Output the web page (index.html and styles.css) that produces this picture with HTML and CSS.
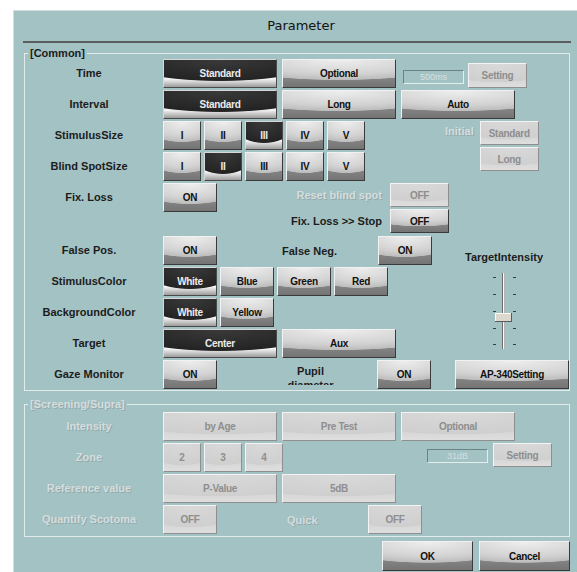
FILE: index.html
```html
<!DOCTYPE html>
<html lang="en">
<head>
  <meta charset="UTF-8">
  <title>Parameter</title>
  <link rel="stylesheet" href="styles.css">
</head>
<body>
  <div class="dialog">
    <div class="title">Parameter</div>
    <div class="rule"></div>

    <!-- Common settings -->
    <fieldset class="group common">
      <legend>[Common]</legend>
      <div class="rows">
        <div class="row">
          <span class="label">Time</span>
          <button class="btn wide on">Standard</button>
          <button class="btn wide">Optional</button>
          <span class="value-box time-box">500ms</span>
          <button class="btn off setting time-setting">Setting</button>
        </div>
        <div class="row">
          <span class="label">Interval</span>
          <button class="btn wide on">Standard</button>
          <button class="btn wide">Long</button>
          <button class="btn wide">Auto</button>
        </div>

        <div class="pair">
          <div class="rows">
            <div class="row">
              <span class="label">StimulusSize</span>
              <button class="btn small">I</button>
              <button class="btn small">II</button>
              <button class="btn small on">III</button>
              <button class="btn small">IV</button>
              <button class="btn small">V</button>
            </div>
            <div class="row">
              <span class="label">Blind SpotSize</span>
              <button class="btn small">I</button>
              <button class="btn small on">II</button>
              <button class="btn small">III</button>
              <button class="btn small">IV</button>
              <button class="btn small">V</button>
            </div>
          </div>
          <div class="initial">
            <span class="dim">Initial</span>
            <div class="stack">
              <button class="btn off setting">Standard</button>
              <button class="btn off setting">Long</button>
            </div>
          </div>
        </div>

        <div class="fix">
          <span class="label">Fix. Loss</span>
          <button class="btn mid">ON</button>
          <div class="stop-grid">
            <span class="dim">Reset blind spot</span>
            <button class="btn off setting">OFF</button>
            <span class="text">Fix. Loss &gt;&gt; Stop</span>
            <button class="btn setting">OFF</button>
          </div>
        </div>

        <div class="middle">
          <div class="rows left-col">
            <div class="row">
              <span class="label">False Pos.</span>
              <button class="btn mid">ON</button>
              <span class="text neg-label">False Neg.</span>
              <button class="btn mid">ON</button>
            </div>
            <div class="row">
              <span class="label">StimulusColor</span>
              <button class="btn mid on">White</button>
              <button class="btn mid">Blue</button>
              <button class="btn mid">Green</button>
              <button class="btn mid">Red</button>
            </div>
            <div class="row">
              <span class="label">BackgroundColor</span>
              <button class="btn mid on">White</button>
              <button class="btn mid">Yellow</button>
            </div>
            <div class="row">
              <span class="label">Target</span>
              <button class="btn wide on">Center</button>
              <button class="btn wide">Aux</button>
            </div>
          </div>
          <div class="intensity">
            <span class="text">TargetIntensity</span>
            <svg class="slider" width="26" height="77" viewBox="0 0 26 77">
              <g fill="#3c3c3c">
                <rect x="2" y="4" width="3" height="1"/><rect x="22" y="4" width="3" height="1"/>
                <rect x="2" y="21" width="3" height="1"/><rect x="22" y="21" width="3" height="1"/>
                <rect x="2" y="38" width="3" height="1"/><rect x="22" y="38" width="3" height="1"/>
                <rect x="2" y="55" width="3" height="1"/><rect x="22" y="55" width="3" height="1"/>
                <rect x="2" y="71" width="3" height="1"/><rect x="22" y="71" width="3" height="1"/>
              </g>
              <rect x="11" y="0" width="1" height="76" fill="#6e6e6e"/>
              <rect x="12" y="0" width="1" height="76" fill="#fafafa"/>
              <rect x="13" y="0" width="1" height="76" fill="#b4b4b4"/>
              <rect x="4" y="40" width="17" height="9" fill="#dcd8ce"/>
              <rect x="4" y="40" width="17" height="1" fill="#fbfbf8"/>
              <rect x="4" y="40" width="1" height="9" fill="#fbfbf8"/>
              <rect x="4" y="48" width="17" height="1" fill="#5a5a5a"/>
              <rect x="20" y="40" width="1" height="9" fill="#5a5a5a"/>
            </svg>
          </div>
        </div>

        <div class="row">
          <span class="label">Gaze Monitor</span>
          <button class="btn mid">ON</button>
          <span class="text pupil">Pupil<br>diameter</span>
          <button class="btn mid pupil-on">ON</button>
          <button class="btn wide ap">AP-340Setting</button>
        </div>
      </div>
    </fieldset>

    <!-- Screening / Supra settings (disabled) -->
    <fieldset class="group screening">
      <legend class="dim">[Screening/Supra]</legend>
      <div class="rows">
        <div class="row">
          <span class="label dim">Intensity</span>
          <button class="btn wide off">by Age</button>
          <button class="btn wide off">Pre Test</button>
          <button class="btn wide off">Optional</button>
        </div>
        <div class="row">
          <span class="label dim">Zone</span>
          <button class="btn small off">2</button>
          <button class="btn small off">3</button>
          <button class="btn small off">4</button>
          <span class="value-box zone-box">31dB</span>
          <button class="btn off setting zone-setting">Setting</button>
        </div>
        <div class="row">
          <span class="label dim">Reference value</span>
          <button class="btn wide off">P-Value</button>
          <button class="btn wide off">5dB</button>
        </div>
        <div class="row">
          <span class="label dim">Quantify Scotoma</span>
          <button class="btn mid off">OFF</button>
          <span class="dim quick">Quick</span>
          <button class="btn mid off">OFF</button>
        </div>
      </div>
    </fieldset>

    <div class="footer">
      <button class="btn footer-btn">OK</button>
      <button class="btn footer-btn">Cancel</button>
    </div>
  </div>
</body>
</html>
```

FILE: styles.css
```css
html, body {
  margin: 0;
  height: 100%;
  overflow: hidden;
  background: #ffffff;
}

body {
  font-family: "Liberation Sans", Arial, sans-serif;
  color: #1c1c1c;
}

.dialog {
  margin: 10px 0 0 13px;
  height: 561px;
  overflow: hidden;
  background: #a3c2c4;
  border-top: 1px solid #d6dcdc;
  border-left: 1px solid #d6dcdc;
}

.title {
  height: 30px;
  line-height: 30px;
  padding-left: 11px;
  text-align: center;
  font: 13px/30px "DejaVu Sans", sans-serif;
  color: #111;
}

.rule {
  height: 2px;
  margin: 0 6px 0 9px;
  background: #5a5e5e;
}

/* Group boxes */
.group {
  min-width: 0;
  margin: 4px 7px 0 10px;
  padding: 0 0 1px 0;
  border: 1px solid #e2eaea;
}

.group legend {
  margin-left: 3px;
  padding: 0 2px;
  font-weight: bold;
  font-size: 11px;
  line-height: 12px;
}

.screening {
  margin-top: 7px;
  padding: 2px 0 2px 0;
}

.rows {
  display: flex;
  flex-direction: column;
  gap: 2px;
}

.row {
  display: flex;
  align-items: center;
  height: 29px;
}

.label {
  flex: none;
  width: 128px;
  margin-right: 10px;
  text-align: center;
  font-weight: bold;
  font-size: 11px;
  line-height: 29px;
  white-space: nowrap;
}

.text {
  font-weight: bold;
  font-size: 11px;
  white-space: nowrap;
}

.dim {
  font-weight: bold;
  font-size: 11px;
  color: #d5dddd;
  text-shadow: 1px 1px 0 #93aaac;
  white-space: nowrap;
}

/* Buttons */
.btn {
  box-sizing: border-box;
  flex: none;
  height: 29px;
  margin: 0;
  padding: 0;
  border: 1px solid;
  border-color: #f2f2f2 #3a3a3a #3a3a3a #f2f2f2;
  font: bold 10px "Liberation Sans", Arial, sans-serif;
  letter-spacing: -0.3px;
  color: #111;
  background:
    radial-gradient(ellipse 110% 75% at 50% 0%, #eeeeee 0%, #d2d2d2 70%, #bdbdbd 97%, transparent 100%),
    linear-gradient(#a2a2a2, #747474);
}

.btn.on {
  color: #ececec;
  border-color: #d8d8d8 #4a4a4a #4a4a4a #d8d8d8;
  background:
    radial-gradient(ellipse 91% 79% at 50% 0%, #3a3a3a 0%, #232323 96%, transparent 100%),
    linear-gradient(#ffffff 0%, #f4f4f4 70%, #9c9c9c 100%);
}

.btn.off {
  color: #8e8e8e;
  border-color: #f4f4f4 #8e8e8e #8e8e8e #f4f4f4;
  background:
    radial-gradient(ellipse 110% 80% at 50% 0%, #d9d9d9 0%, #cfcfcf 96%, transparent 100%),
    linear-gradient(#c6c6c6, #dedede);
}

.wide { width: 114px; }
.wide + .wide { margin-left: 5px; }

.small { width: 38px; }
.small + .small { margin-left: 3px; }

.mid { width: 54px; }
.mid + .mid { margin-left: 3px; }

.setting {
  width: 59px;
  height: 24px;
}

.value-box {
  box-sizing: border-box;
  flex: none;
  width: 61px;
  height: 14px;
  border: 1px solid;
  border-color: #6c8385 #e6eded #e6eded #6c8385;
  font-size: 9px;
  line-height: 12px;
  text-align: center;
  color: #d6dfdf;
}

.time-box {
  align-self: flex-start;
  margin: 11px 0 0 7px;
}

.time-setting {
  align-self: flex-end;
  height: 25px;
  margin-left: 4px;
}

/* Stimulus / blind spot pair with the initial stack */
.pair {
  display: flex;
  align-items: flex-start;
}

.initial {
  display: flex;
  align-items: flex-start;
  margin-left: 80px;
}

.initial .dim {
  margin: 4px 6px 0 0;
  line-height: 13px;
}

.stack {
  display: flex;
  flex-direction: column;
  gap: 2px;
}

/* Fix loss block */
.fix {
  display: flex;
  align-items: flex-start;
  height: 51px;
}

.stop-grid {
  display: grid;
  grid-template-columns: 165px 59px;
  grid-auto-rows: 24px;
  column-gap: 8px;
  row-gap: 2px;
  align-items: center;
}

.stop-grid > span {
  text-align: right;
}

/* False pos. to target, with intensity slider */
.middle {
  display: flex;
}

.left-col {
  flex: none;
  width: 431px;
}

.neg-label {
  width: 96px;
  margin-left: 65px;
}

.intensity {
  flex: none;
  width: 96px;
  display: flex;
  flex-direction: column;
  align-items: center;
  padding-top: 15px;
}

.intensity .text {
  line-height: 13px;
}

.slider {
  display: block;
  margin-top: 9px;
}

.pupil {
  align-self: flex-start;
  width: 58px;
  height: 21px;
  margin: 4px 0 0 65px;
  overflow: hidden;
  text-align: center;
  line-height: 14px;
}

.pupil-on { margin-left: 38px; }

.ap { margin-left: 24px; }

/* Screening rows */
.zone-box {
  align-self: flex-start;
  margin: 6px 0 0 144px;
}

.zone-setting {
  align-self: flex-start;
  margin-left: 5px;
}

.quick {
  width: 81px;
  margin-left: 70px;
}

.footer {
  display: flex;
  justify-content: flex-end;
  gap: 6px;
  margin-top: 4px;
  padding-right: 7px;
}

.footer-btn {
  width: 91px;
  height: 30px;
  font-size: 10px;
}
```
